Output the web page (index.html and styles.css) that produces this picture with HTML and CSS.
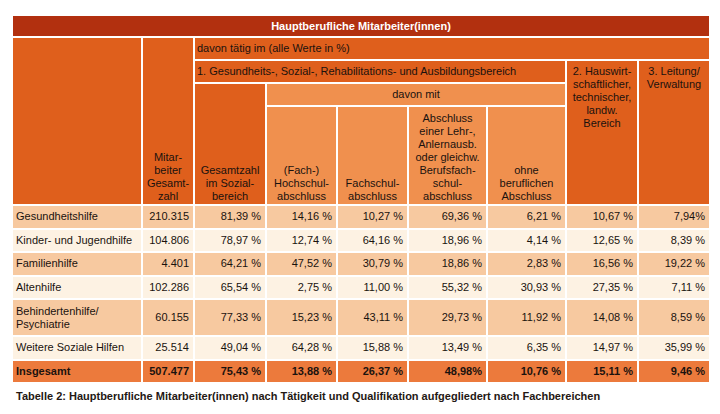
FILE: index.html
```html
<!DOCTYPE html>
<html lang="de">
<head>
<meta charset="utf-8">
<title>Tabelle 2</title>
<link rel="stylesheet" href="styles.css">
</head>
<body>
<div class="wrap">
<table class="t">
<colgroup>
<col class="c1"><col class="c2"><col class="c3"><col class="c4"><col class="c5"><col class="c6"><col class="c7"><col class="c8"><col class="c9">
</colgroup>
<tr class="r-title"><th colspan="9" class="title">Hauptberufliche Mitarbeiter(innen)</th></tr>
<tr class="r-h"><td rowspan="4" class="dk"></td><td rowspan="4" class="dk bot">Mitar-<br>beiter<br>Gesamt-<br>zahl</td><td colspan="7" class="dk left">davon tätig im (alle Werte in %)</td></tr>
<tr class="r-h"><td colspan="5" class="dk left">1. Gesundheits-, Sozial-, Rehabilitations- und Ausbildungsbereich</td><td rowspan="3" class="dk top">2. Hauswirt-<br>schaftlicher,<br>technischer,<br>landw.<br>Bereich</td><td rowspan="3" class="dk top">3. Leitung/<br>Verwaltung</td></tr>
<tr class="r-h"><td rowspan="2" class="dk bot">Gesamtzahl<br>im Sozial-<br>bereich</td><td colspan="4" class="lt mid">davon mit</td></tr>
<tr class="r-sub"><td class="lt bot">(Fach-)<br>Hochschul-<br>abschluss</td><td class="lt bot">Fachschul-<br>abschluss</td><td class="lt bot">Abschluss<br>einer Lehr-,<br>Anlernausb.<br>oder gleichw.<br>Berufsfach-<br>schul-<br>abschluss</td><td class="lt bot">ohne<br>beruflichen<br>Abschluss</td></tr>
<tr class="d odd"><td>Gesundheitshilfe</td><td>210.315</td><td>81,39 %</td><td>14,16 %</td><td>10,27 %</td><td>69,36 %</td><td>6,21 %</td><td>10,67 %</td><td>7,94%</td></tr>
<tr class="d even"><td>Kinder- und Jugendhilfe</td><td>104.806</td><td>78,97 %</td><td>12,74 %</td><td>64,16 %</td><td>18,96 %</td><td>4,14 %</td><td>12,65 %</td><td>8,39 %</td></tr>
<tr class="d odd"><td>Familienhilfe</td><td>4.401</td><td>64,21 %</td><td>47,52 %</td><td>30,79 %</td><td>18,86 %</td><td>2,83 %</td><td>16,56 %</td><td>19,22 %</td></tr>
<tr class="d even"><td>Altenhilfe</td><td>102.286</td><td>65,54 %</td><td>2,75 %</td><td>11,00 %</td><td>55,32 %</td><td>30,93 %</td><td>27,35 %</td><td>7,11 %</td></tr>
<tr class="d odd dbl"><td>Behindertenhilfe/<br>Psychiatrie</td><td>60.155</td><td>77,33 %</td><td>15,23 %</td><td>43,11 %</td><td>29,73 %</td><td>11,92 %</td><td>14,08 %</td><td>8,59 %</td></tr>
<tr class="d even"><td>Weitere Soziale Hilfen</td><td>25.514</td><td>49,04 %</td><td>64,28 %</td><td>15,88 %</td><td>13,49 %</td><td>6,35 %</td><td>14,97 %</td><td>35,99 %</td></tr>
<tr class="d total"><td>Insgesamt</td><td>507.477</td><td>75,43 %</td><td>13,88 %</td><td>26,37 %</td><td>48,98%</td><td>10,76 %</td><td>15,11 %</td><td>9,46 %</td></tr>
</table>
<p class="caption">Tabelle 2: Hauptberufliche Mitarbeiter(innen) nach Tätigkeit und Qualifikation aufgegliedert nach Fachbereichen</p>
</div>
</body>
</html>
```
FILE: styles.css
```css
html, body {
  margin: 0;
  padding: 0;
  background: #ffffff;
}
body {
  font-family: "Liberation Sans", Arial, sans-serif;
  font-size: 11px;
  color: #1a120e;
}
.wrap {
  padding: 14px 0 0 11px;
}
.t {
  border-collapse: separate;
  border-spacing: 2px 2px;
  table-layout: fixed;
  width: 696px;
}
.c1 { width: 128px; }
.c2 { width: 50px; }
.c3 { width: 70px; }
.c4 { width: 69px; }
.c5 { width: 69px; }
.c6 { width: 77px; }
.c7 { width: 77px; }
.c8 { width: 70px; }
.c9 { width: 70px; }
.t td, .t th {
  padding: 0;
  line-height: 13px;
  overflow: hidden;
}
.r-title { height: 20px; }
.title {
  background: #b2300f;
  color: #ffffff;
  font-weight: bold;
  text-align: center;
  vertical-align: middle;
}
.r-h { height: 21px; }
.r-sub { height: 97px; }
.dk { background: #df5f1c; }
.lt { background: #f0904e; }
.left {
  text-align: left;
  padding-left: 2px !important;
  vertical-align: middle;
}
.mid {
  text-align: center;
  vertical-align: middle;
}
.top {
  text-align: center;
  vertical-align: top;
  padding-top: 4px !important;
}
.bot {
  text-align: center;
  vertical-align: bottom;
  padding-bottom: 1px !important;
}
.d { height: 21.5px; }
.d.dbl { height: 35px; }
.d td {
  text-align: right;
  padding-right: 4px;
  vertical-align: middle;
}
.d td:first-child {
  text-align: left;
  padding-left: 3px;
  padding-right: 0;
}
.odd td { background: #f7c9a0; }
.even td { background: #fdf2e3; }
.total td {
  background: #ec7a3c;
  font-weight: bold;
}
.caption {
  margin: 6px 0 0 5px;
  font-weight: bold;
  font-size: 11px;
  color: #241814;
}
```
